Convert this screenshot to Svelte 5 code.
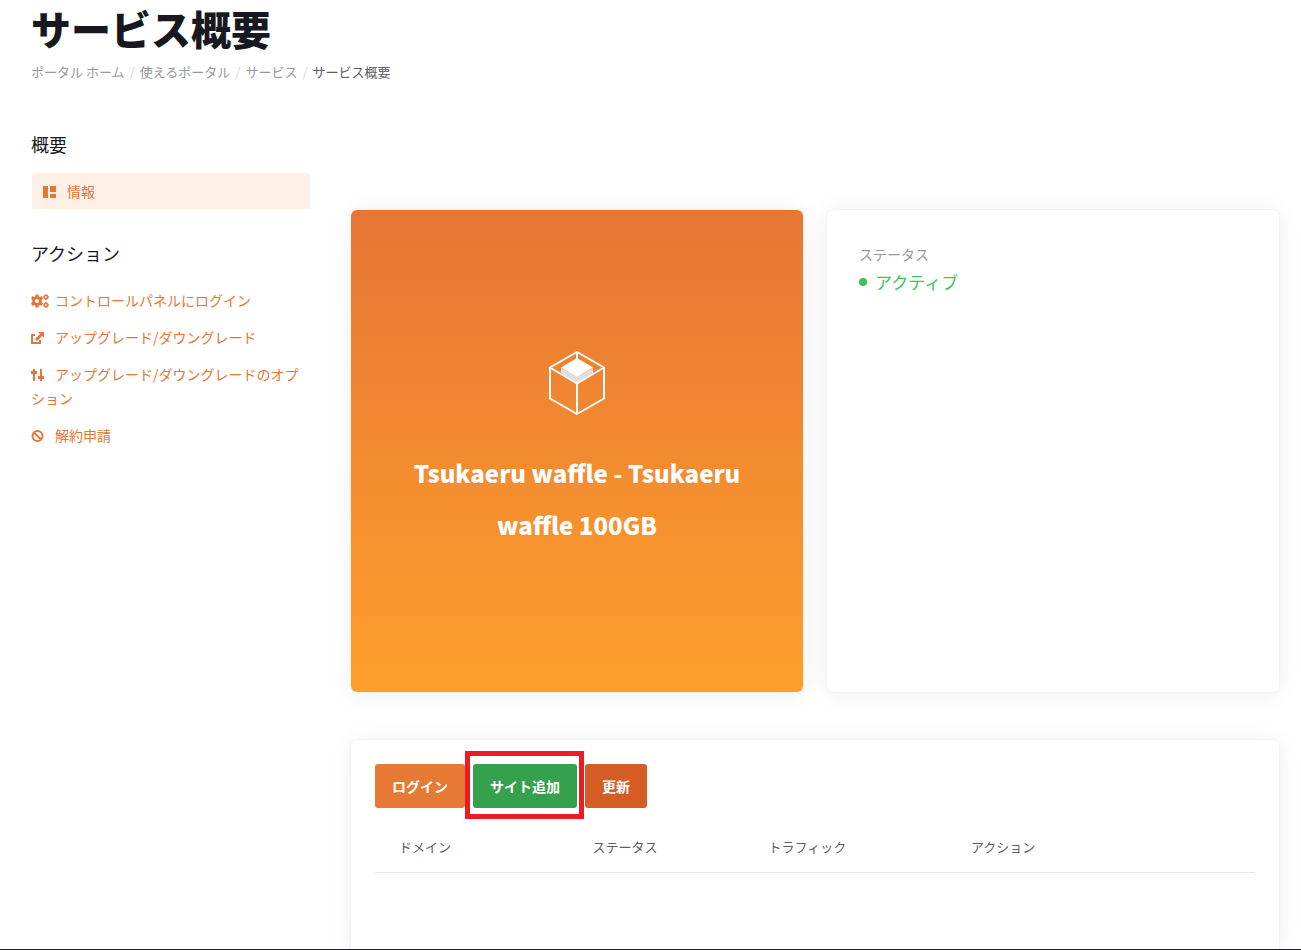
<script lang="ts">
  const crumbs = ["ポータル ホーム", "使えるポータル", "サービス"];
  const actions = [
    { icon: "gears", label: "コントロールパネルにログイン" },
    { icon: "external", label: "アップグレード/ダウングレード" },
    { icon: "sliders", label: "アップグレード/ダウングレードのオプション" },
    { icon: "ban", label: "解約申請" },
  ];
  const columns = ["ドメイン", "ステータス", "トラフィック", "アクション"];
</script>

<svelte:head>
  <title>サービス概要</title>
</svelte:head>

{#snippet icon(name: string)}
  <svg class="icon" viewBox="0 0 18 14" aria-hidden="true">
    {#if name === "layout"}
      <path d="M0 1h5v12H0zM7 1h6v6H7zM7 9h6v4H7z" />
    {:else if name === "gears"}
      <path
        fill-rule="evenodd"
        d="M4.600 .6h2.800l.4 1.800 1.100.5 1.600-.8 1.600 2.500-1.300 1.300v2.200l1.300 1.300-1.600 2.500-1.600-.8-1.100.5-.4 1.800H4.600l-.4-1.800-1.100-.5-1.600.8L0 9.400l1.300-1.300V5.900L0 4.600l1.500-2.500 1.600.8 1.100-.5zM6 5a2 2 0 1 0 0 4 2 2 0 0 0 0-4z"
      />
      <g fill="none" stroke="currentColor">
        <circle cx="15" cy="3" r="1.700" stroke-width="1.600" />
        <circle cx="15" cy="11" r="1.700" stroke-width="1.600" />
        <path d="M15 0v1M15 5v1M12 3h1M17 3h1M15 8v1M15 13v1M12 11h1M17 11h1" />
      </g>
    {:else if name === "external"}
      <path d="M0 3h4v2H2v6h6V9h2v4H0zM7 1h6v6l-2-2-5 5-2-2 5-5z" />
    {:else if name === "sliders"}
      <path d="M2 1h2v2h2v3H4v7H2V6H0V3h2zM9 1h2v7h2v3h-2v2H9v-2H7V8h2z" />
    {:else}
      <g fill="none" stroke="currentColor" stroke-width="2">
        <circle cx="6.500" cy="7" r="5" />
        <path d="M3 3.500l7 7" />
      </g>
    {/if}
  </svg>
{/snippet}

<div class="page">
  <header>
    <h1>サービス概要</h1>
    <nav class="crumbs" aria-label="パンくず">
      {#each crumbs as crumb}
        <a href="/">{crumb}</a><span class="sep">/</span>
      {/each}
      <span class="current">サービス概要</span>
    </nav>
  </header>

  <div class="layout">
    <aside>
      <h2>概要</h2>
      <a class="active" href="#info">{@render icon("layout")}情報</a>
      <h2>アクション</h2>
      <ul>
        {#each actions as action}
          <li><a href="#{action.icon}">{@render icon(action.icon)}{action.label}</a></li>
        {/each}
      </ul>
    </aside>

    <main>
      <div class="cards">
        <section class="card product">
          <svg class="box" viewBox="0 0 58 66" aria-hidden="true">
            <path d="M13 18l16 9 16-9v5l-16 10-16-10z" fill="#dedfe3" />
            <path d="M29 8l16 9.500-16 9.500-16-9.500z" fill="#fff" />
            <path
              d="M29 2l27 15.500v31L29 64 2 48.500v-31zM2 17.500l27 16 27-16M29 33.500V64M29 2v7"
              fill="none"
              stroke="#fff"
              stroke-width="2"
              stroke-linejoin="round"
            />
          </svg>
          <h3>Tsukaeru waffle - Tsukaeru waffle 100GB</h3>
        </section>
        <section class="card status">
          <div class="label">ステータス</div>
          <div class="value">アクティブ</div>
        </section>
      </div>

      <section class="card sites">
        <div class="buttons">
          <button type="button" class="login">ログイン</button>
          <button type="button" class="add">サイト追加</button>
          <button type="button" class="refresh">更新</button>
        </div>
        <table>
          <thead>
            <tr>
              {#each columns as column}
                <th scope="col">{column}</th>
              {/each}
            </tr>
          </thead>
        </table>
      </section>
    </main>
  </div>
  <footer></footer>
</div>

<style>
  :global(body) {
    background: #fff;
    color: #17191e;
    font-family: "Noto Sans CJK JP", sans-serif;
    font-size: 14px;
    line-height: 24px;
  }
  .page {
    min-height: 100vh;
    display: flex;
    flex-direction: column;
  }
  header {
    padding: 0 31px;
  }
  h1 {
    margin: 0;
    font-size: 40px;
    line-height: 56px;
    font-weight: 900;
  }
  .crumbs {
    display: flex;
    padding-top: 4px;
    font-size: 13px;
    color: #5b5e66;
  }
  .crumbs a {
    color: #96999e;
    text-decoration: none;
  }
  .sep {
    padding: 0 5px;
    color: #d5d7da;
  }
  .layout {
    flex: 1;
    display: grid;
    grid-template-columns: 279px minmax(0, 1fr);
    column-gap: 41px;
    padding: 0 22px 0 31px;
    overflow: hidden;
  }
  aside {
    padding-top: 47px;
  }
  h2 {
    margin: 0 0 15px;
    font-size: 18px;
    line-height: 27px;
    font-weight: 400;
  }
  aside a {
    color: #e67635;
    text-decoration: none;
  }
  .icon {
    width: 18px;
    height: 14px;
    margin-right: 6px;
    vertical-align: -2px;
    fill: currentColor;
  }
  .active {
    display: block;
    margin: 0 0 31px 1px;
    padding: 6px 11px;
    border-radius: 3px;
    background: #fef0e4;
  }
  ul {
    margin: 0;
    padding: 6px 0 0;
    list-style: none;
    display: flex;
    flex-direction: column;
    gap: 13px;
  }
  main {
    display: flex;
    flex-direction: column;
    padding-top: 126px;
  }
  .cards {
    display: grid;
    grid-template-columns: 1fr 1fr;
    gap: 24px;
    margin-bottom: 48px;
  }
  .card {
    border-radius: 6px;
    background: #fff;
    box-shadow:
      0 0 2px rgba(0, 0, 0, 0.08),
      0 2px 24px rgba(0, 0, 0, 0.07);
  }
  .product {
    box-sizing: border-box;
    min-height: 482px;
    padding: 32px;
    display: flex;
    flex-direction: column;
    align-items: center;
    justify-content: center;
    background: linear-gradient(#e67635, #fe9f2b);
    color: #fff;
  }
  .box {
    width: 58px;
    height: 66px;
    margin-bottom: 31px;
  }
  h3 {
    margin: 0 0 1px;
    padding: 0 24px;
    font-size: 24px;
    line-height: 52px;
    font-weight: 900;
    text-align: center;
  }
  .status {
    padding: 32px;
  }
  .label {
    color: #96999e;
  }
  .value {
    display: flex;
    align-items: center;
    gap: 8px;
    font-size: 17px;
    line-height: 32px;
    color: #41bf59;
  }
  .value::before {
    content: "";
    width: 8px;
    height: 8px;
    border-radius: 50%;
    background: currentColor;
  }
  .sites {
    flex: 1;
    padding: 24px;
    border-radius: 6px 6px 0 0;
  }
  .buttons {
    display: flex;
    gap: 8px;
  }
  button {
    padding: 10px 17px;
    border: 0;
    border-radius: 3px;
    color: #fff;
    font: inherit;
    font-weight: 700;
    cursor: pointer;
  }
  .login {
    background: #e67a35;
  }
  .add {
    position: relative;
    background: #36a14c;
  }
  .add::after {
    content: "";
    position: absolute;
    inset: -13px -7px -11px -8px;
    border: 5px solid #ed1c24;
  }
  .refresh {
    background: #d65c25;
  }
  table {
    width: 100%;
    margin-top: 16px;
    border-collapse: collapse;
    table-layout: fixed;
  }
  th {
    box-sizing: border-box;
    padding: 11px 24px 13px;
    border-bottom: 1px solid #e6e7e8;
    color: #5b5e66;
    font-size: 13px;
    font-weight: 400;
    text-align: left;
  }
  th:nth-child(1) {
    width: 22%;
  }
  th:nth-child(2) {
    width: 20%;
  }
  th:nth-child(3) {
    width: 23%;
  }
  footer {
    height: 1px;
    background: #1c2029;
  }
</style>
